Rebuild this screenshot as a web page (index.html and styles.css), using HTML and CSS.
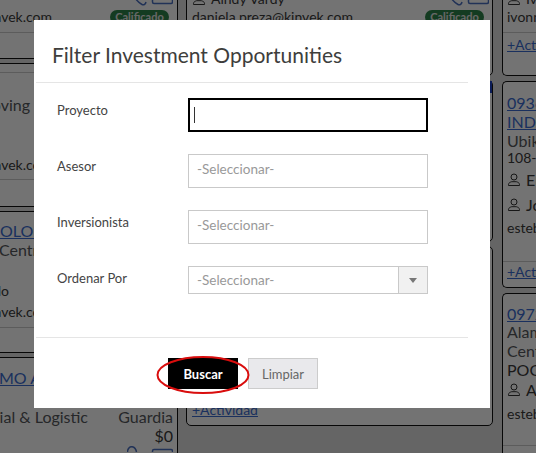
FILE: index.html
```html
<!DOCTYPE html>
<html lang="en">
<head>
    <meta charset="UTF-8">
    <meta name="viewport" content="width=device-width, initial-scale=1.0">
    <title>Filter Investment Opportunities</title>
    <link rel="stylesheet" href="styles.css">
</head>
<body>
    <svg class="defs" width="0" height="0">
        <symbol id="person" viewBox="0 0 14 14">
            <circle cx="7" cy="4" r="3" fill="none" stroke="currentColor"/>
            <path d="M1.500 12.500v-1.200c0-1.400 2-2.300 3.200-2.600h4.600c1.200.3 3.200 1.200 3.200 2.600v1.200z" fill="none" stroke="currentColor"/>
        </symbol>
        <symbol id="contact" viewBox="0 0 43 16">
            <path d="M1 0c1.500 6 7 12.500 11 14.500 2 1 3.500-.5 4-2.500" fill="none" stroke="#4a6fc0" stroke-width="1.500"/>
            <path d="M22.500 0v12a1.500 1.500 0 0 0 1.500 1.500h17a1.500 1.500 0 0 0 1.500-1.500V0" fill="none" stroke="#4a6fc0" stroke-width="1.500"/>
        </symbol>
        <symbol id="contact-top" viewBox="0 0 46 6">
            <path d="M0.500 6c0-3 2-5.300 4-5.300 2.500 0 4.500 2.500 5 5.300" fill="none" stroke="#4a6fc0" stroke-width="1.500"/>
            <path d="M25.500 6V5a1.500 1.500 0 0 1 1.500-1.500h17a1.500 1.500 0 0 1 1.500 1.500v1" fill="none" stroke="#4a6fc0" stroke-width="1.500"/>
        </symbol>
    </svg>

    <!-- board behind the dialog -->
    <div class="board">
        <div class="col col-left">
            <div class="card card-a">
                <div class="row row-icons"><svg class="contact"><use href="#contact"/></svg></div>
                <div class="row row-between"><span class="cut cut-mail">daniela.ruiz@kinvek.com</span><span class="badge">Calificado</span></div>
                <div class="sep sep-a"></div>
            </div>
            <div class="card card-b">
                <div class="sep sep-b1"></div>
                <div class="row big muted cut cut-short gap-b1">Moving</div>
                <div class="row cut cut-mail gap-b2">esteban@kinvek.com</div>
                <div class="sep sep-b2"></div>
            </div>
            <div class="card card-c">
                <div class="row big link gap-c1"><a>OLONIA</a></div>
                <div class="row big muted pull">Centro</div>
                <div class="row cut cut-o gap-c2">Jorge Prado</div>
                <div class="row cut cut-mail gap-c3">esteban@kinvek.com</div>
                <div class="sep sep-c"></div>
            </div>
            <div class="card card-d">
                <div class="row big link pull gap-d1"><a>MO ALTO</a></div>
                <div class="row big muted row-between gap-d2"><span class="cut cut-logistic">Industrial &amp; Logistic</span><span class="guardia">Guardia</span></div>
                <div class="row big row-end">$0</div>
                <div class="row row-icons"><svg class="contact-top"><use href="#contact-top"/></svg></div>
            </div>
        </div>

        <div class="col col-mid">
            <div class="card card-a">
                <div class="row row-person"><svg class="person"><use href="#person"/></svg>Aindy Vardy<svg class="contact"><use href="#contact"/></svg></div>
                <div class="row row-between"><span>daniela.preza@kinvek.com</span><span class="badge">Calificado</span></div>
            </div>
            <div class="card card-m2"><div class="blip"></div></div>
            <div class="card card-m3">
                <div class="row row-act"><a class="act">+Actividad</a></div>
            </div>
        </div>

        <div class="col col-right">
            <div class="card card-a">
                <div class="row row-person"><svg class="person"><use href="#person"/></svg>Ivonne</div>
                <div class="row">ivonne@kinvek.com</div>
                <div class="sep sep-r1"></div>
                <div class="row"><a class="act">+Actividad</a></div>
            </div>
            <div class="card card-r2">
                <div class="row big link gap-r1"><a>0936 -</a></div>
                <div class="row big link"><a>INDUSTRIAL</a></div>
                <div class="row big muted">Ubika</div>
                <div class="row row-short">108-B</div>
                <div class="row row-person gap-r2"><svg class="person"><use href="#person"/></svg><span class="big">Elena</span></div>
                <div class="row row-person gap-r3"><svg class="person"><use href="#person"/></svg><span class="big">Jorge</span></div>
                <div class="row gap-r4">esteban@kinvek.com</div>
                <div class="sep sep-r2"></div>
                <div class="row"><a class="act">+Actividad</a></div>
            </div>
            <div class="card card-r3">
                <div class="row big link gap-r5"><a>0972 -</a></div>
                <div class="row big muted row-tight">Alameda</div>
                <div class="row big muted">Centro</div>
                <div class="row big">POOL</div>
                <div class="row row-person gap-r6"><svg class="person"><use href="#person"/></svg><span class="big">Ana</span></div>
                <div class="row gap-r7">esteban@kinvek.com</div>
                <div class="sep sep-r3"></div>
            </div>
        </div>
    </div>

    <div class="overlay"></div>

    <div class="modal">
        <h2 class="modal-title">Filter Investment Opportunities</h2>
        <hr class="rule">
        <form class="filter-form">
            <label class="field-label">Proyecto</label>
            <div class="input input-focus"><span class="caret"></span></div>
            <label class="field-label">Asesor</label>
            <div class="input">-Seleccionar-</div>
            <label class="field-label">Inversionista</label>
            <div class="input">-Seleccionar-</div>
            <label class="field-label">Ordenar Por</label>
            <div class="combo">
                <span class="combo-text">-Seleccionar-</span>
                <span class="combo-btn"><span class="combo-arrow"></span></span>
            </div>
        </form>
        <hr class="rule">
        <div class="modal-footer">
            <button class="btn btn-search" type="button">Buscar</button>
            <button class="btn btn-clear" type="button">Limpiar</button>
            <svg class="highlight" width="95" height="40" viewBox="0 0 95 40">
                <ellipse cx="47" cy="20" rx="45.500" ry="18" fill="none" stroke="#d90d0d" stroke-width="2"/>
            </svg>
        </div>
    </div>
</body>
</html>
```

FILE: styles.css
```css
* {
    margin: 0;
    padding: 0;
    box-sizing: border-box;
}
html, body {
    height: 100%;
    overflow: hidden;
}
body {
    font-family: 'Lato', sans-serif;
    background: #e0e0e0;
    color: #3a3a3a;
    font-size: 14px;
}
.defs {
    position: absolute;
}

/* board */
.board {
    display: flex;
    margin-top: -20px;
}
.col {
    display: flex;
    flex-direction: column;
    flex-shrink: 0;
}
.col-left {
    width: 178px;
    margin-right: 8px;
    gap: 4px;
}
.col-mid {
    width: 307px;
    margin-right: 9px;
    gap: 4px;
}
.col-right {
    width: 200px;
    gap: 5px;
}
.card {
    background: #fff;
    border: 1px solid #111;
    border-radius: 5px;
    flex-shrink: 0;
    padding-top: 9px;
}
.col-left .card {
    border-left: 0;
    border-radius: 0 5px 5px 0;
}
.col-right .card {
    border-right: 0;
    padding-left: 4px;
}
.col-mid .card {
    padding-left: 5px;
}
.card-a { height: 96px; }
.col-left .card-a { height: 79px; }
.card-b { height: 144px; padding-top: 0; }
.card-c { height: 142px; padding-top: 0; }
.card-d { height: 130px; padding-top: 0; }
.card-m2 { height: 162px; padding-top: 0; }
.card-m3 { height: 180px; }
.card-r2 { height: 207px; padding-top: 0; }
.card-r3 { height: 180px; padding-top: 0; }

.row {
    height: 18px;
    line-height: 18px;
    white-space: nowrap;
}
.row-between {
    display: flex;
    justify-content: space-between;
    align-items: center;
    padding-right: 8px;
}
.row-end {
    text-align: right;
    padding-right: 4px;
}
.row-icons {
    display: flex;
    justify-content: flex-end;
    padding-right: 4px;
}
.row-person {
    display: flex;
    align-items: center;
    gap: 5px;
}
.row-act {
    margin-top: 145px;
}
.big {
    font-size: 16px;
}
.row.big {
    height: 19px;
    line-height: 19px;
}
.muted {
    color: #55585c;
}
.link a, .act {
    color: #3a6cd0;
    text-decoration: underline;
}
.cut {
    display: flex;
    justify-content: flex-end;
}
.cut-mail { width: 52px; }
.cut-short { width: 30px; }
.cut-o { width: 9px; }
.cut-logistic { width: 88px; }
.pull {
    margin-left: -1px;
}
.guardia {
    margin-right: -4px;
}
.badge {
    width: 59px;
    height: 14px;
    line-height: 14px;
    border-radius: 7px;
    background: #2e844a;
    color: #e6e6e6;
    font-size: 11px;
    font-weight: 700;
    text-align: center;
}
.contact {
    width: 43px;
    height: 16px;
}
.col-mid .contact {
    align-self: flex-start;
    margin-left: auto;
    margin-right: 3px;
}
.contact-top {
    width: 46px;
    height: 6px;
    margin-top: 1px;
}
.person {
    width: 14px;
    height: 14px;
    color: #333;
}
.blip {
    width: 2px;
    height: 12px;
    background: #1a3fc0;
    margin-left: auto;
}
.sep {
    border-top: 1px solid #ccc;
}
.sep-a { margin-top: 6px; }
.sep-b1 { margin-top: 8px; }
.gap-b1 { margin-top: 22px; }
.gap-b2 { margin-top: 42px; }
.sep-b2 { margin-top: 5px; }
.gap-c1 { margin-top: 9px; }
.gap-c2 { margin-top: 23px; }
.gap-c3 { margin-top: 3px; }
.sep-c { margin-top: 6px; }
.gap-d1 { margin-top: 10px; }
.gap-d2 { margin-top: 20px; }
.sep-r1 { margin: 6px -4px 3px; }
.gap-r1 { margin-top: 11px; }
.row-short { margin-top: -1px; }
.row-tight { margin-top: -1px; }
.gap-r2 { margin-top: 4px; }
.gap-r3 { margin-top: 7px; }
.gap-r4 { margin-top: 5px; }
.gap-r5 { margin-top: 10px; }
.gap-r6 { margin-top: 2px; }
.gap-r7 { margin-top: 6px; }
.sep-r2 { margin: 24px -4px 1px; }
.sep-r3 { margin: 22px -4px 0; }

/* dialog */
.overlay {
    position: fixed;
    top: 0;
    left: 0;
    width: 100%;
    height: 100%;
    background: rgba(0, 0, 0, 0.55);
}
.modal {
    position: absolute;
    top: 20px;
    left: 34px;
    width: 456px;
    height: 388px;
    background: #fff;
    color: #444;
}
.modal-title {
    height: 62px;
    padding: 22px 0 0 18px;
    font-size: 21px;
    line-height: 26px;
    font-weight: 400;
    color: #3e3e3c;
}
.rule {
    height: 1px;
    margin: 0 22px 0 2px;
    border: 0;
    background: #e5e5e5;
}
.filter-form {
    display: grid;
    grid-template-columns: 131px 240px;
    grid-auto-rows: min-content;
    row-gap: 22px;
    height: 254px;
    padding: 15px 0 0 23px;
}
.field-label {
    font-size: 13px;
    line-height: 24px;
    color: #444;
}
.input {
    height: 34px;
    line-height: 28px;
    padding-left: 8px;
    border: 1px solid #c9c9c9;
    font-size: 13.500px;
    color: #999;
}
.input-focus {
    display: flex;
    align-items: center;
    border: 2px solid #000;
    padding-left: 4px;
}
.caret {
    width: 1px;
    height: 16px;
    background: #333;
}
.combo {
    display: flex;
    height: 28px;
    border: 1px solid #c9c9c9;
    font-size: 13.500px;
    color: #999;
}
.combo-text {
    flex: 1;
    padding-left: 8px;
    line-height: 27px;
}
.combo-btn {
    display: flex;
    align-items: center;
    justify-content: center;
    width: 29px;
    background: #f1f1f1;
    border-left: 1px solid #c9c9c9;
}
.combo-arrow {
    width: 0;
    height: 0;
    border-left: 4px solid transparent;
    border-right: 4px solid transparent;
    border-top: 5px solid #777;
}
.modal-footer {
    position: relative;
    display: flex;
    gap: 10px;
    margin-left: 134px;
    padding-top: 20px;
}
.btn {
    width: 70px;
    height: 31px;
    font-family: 'Lato', sans-serif;
    font-size: 13px;
    border: 1px solid #ccc;
}
.btn-search {
    background: #000;
    border-color: #000;
    color: #fff;
    font-weight: 700;
}
.btn-clear {
    background: #e9e9ec;
    color: #666;
}
.highlight {
    position: absolute;
    top: 17px;
    left: -12px;
}
```
